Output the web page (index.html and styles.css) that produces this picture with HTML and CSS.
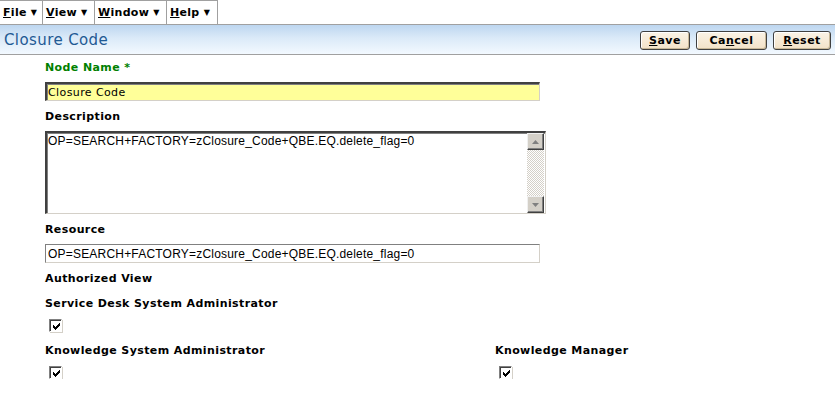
FILE: index.html
```html
<!DOCTYPE html>
<html lang="en">

<head>
    <meta charset="UTF-8">
    <title>Closure Code</title>
    <link rel="stylesheet" href="styles.css">
</head>

<body>
    <!-- Menu bar -->
    <div class="menubar">
        <div class="menu"><u>F</u>ile <span class="arrow">&#9660;</span></div>
        <div class="menu"><u>V</u>iew <span class="arrow">&#9660;</span></div>
        <div class="menu"><u>W</u>indow <span class="arrow">&#9660;</span></div>
        <div class="menu"><u>H</u>elp <span class="arrow">&#9660;</span></div>
    </div>

    <!-- Title bar -->
    <div class="titlebar">
        <h1 class="title">Closure Code</h1>
        <div class="buttons">
            <button class="btn btn-save"><u>S</u>ave</button>
            <button class="btn btn-cancel">Ca<u>n</u>cel</button>
            <button class="btn btn-reset"><u>R</u>eset</button>
        </div>
    </div>

    <!-- Form -->
    <div class="form">
        <div class="label required first">Node Name *</div>
        <input class="field field-name" type="text" value="Closure Code">

        <div class="label">Description</div>
        <div class="textbox">
            <textarea class="textbox-text">OP=SEARCH+FACTORY=zClosure_Code+QBE.EQ.delete_flag=0</textarea>
            <div class="scroll">
                <div class="scroll-btn">
                    <svg width="7" height="4" viewBox="0 0 7 4"><path d="M0 4 L3.5 0 L7 4 Z" fill="#808080"/></svg>
                </div>
                <div class="scroll-track"></div>
                <div class="scroll-btn">
                    <svg width="7" height="4" viewBox="0 0 7 4"><path d="M0 0 L3.5 4 L7 0 Z" fill="#808080"/></svg>
                </div>
            </div>
        </div>

        <div class="label">Resource</div>
        <input class="field field-resource" type="text" value="OP=SEARCH+FACTORY=zClosure_Code+QBE.EQ.delete_flag=0">

        <div class="label">Authorized View</div>

        <div class="label label-role">Service Desk System Administrator</div>
        <span class="check">
            <svg width="7" height="7" viewBox="0 0 7 7" shape-rendering="crispEdges"><path d="M0 2h1v1h1v1h1v-1h1v-1h1v-1h1v-1h1v3h-1v1h-1v1h-1v1h-1v1h-1v-1h-1v-1h-1z" fill="#000"/></svg>
        </span>

        <div class="roles">
            <div class="role">
                <div class="label label-role2">Knowledge System Administrator</div>
                <span class="check">
                    <svg width="7" height="7" viewBox="0 0 7 7" shape-rendering="crispEdges"><path d="M0 2h1v1h1v1h1v-1h1v-1h1v-1h1v-1h1v3h-1v1h-1v1h-1v1h-1v1h-1v-1h-1v-1h-1z" fill="#000"/></svg>
                </span>
            </div>
            <div class="role role-last">
                <div class="label label-role2">Knowledge Manager</div>
                <span class="check">
                    <svg width="7" height="7" viewBox="0 0 7 7" shape-rendering="crispEdges"><path d="M0 2h1v1h1v1h1v-1h1v-1h1v-1h1v-1h1v3h-1v1h-1v1h-1v1h-1v1h-1v-1h-1v-1h-1z" fill="#000"/></svg>
                </span>
            </div>
        </div>
    </div>
</body>

</html>
```

FILE: styles.css
```css
* {
    padding: 0;
    margin: 0;
    box-sizing: border-box;
}

body {
    background-color: #ffffff;
    font-family: "DejaVu Sans", Verdana, sans-serif;
    font-size: 11px;
    color: #000000;
}

/* Menu bar */
.menubar {
    display: flex;
    height: 24px;
}

.menu {
    height: 24px;
    padding: 5px 4px 0 3px;
    border: 1px solid #a0a0a0;
    border-bottom: none;
    border-left: none;
    font-weight: bold;
    font-size: 11px;
    letter-spacing: 0.3px;
    white-space: nowrap;
}

.menu:first-child {
    width: 43px;
}

.menu:nth-child(2) {
    width: 52px;
}

.menu:nth-child(3) {
    width: 72px;
}

.menu:nth-child(4) {
    width: 51px;
}

.arrow {
    font-size: 8px;
    position: relative;
    top: -1px;
}

/* Title bar */
.titlebar {
    height: 31px;
    border-top: 1px solid #a0a0a0;
    border-bottom: 1px solid #a0a0a0;
    background: linear-gradient(to bottom, #bdd6f0, #dbeaf8 45%, #f3f9ff);
    display: flex;
    align-items: center;
    justify-content: space-between;
    padding: 0 4px 0 4px;
}

.title {
    font-size: 15px;
    font-weight: normal;
    letter-spacing: 0.4px;
    color: #1f5a94;
}

.buttons {
    display: flex;
    gap: 6px;
    margin-top: 1px;
}

.btn {
    height: 19px;
    font-family: "DejaVu Sans", Verdana, sans-serif;
    font-size: 11px;
    font-weight: bold;
    color: #000000;
    background: linear-gradient(to bottom, #fbf3e6, #f2e2c8);
    border: 1px solid #404040;
    border-radius: 3px;
    box-shadow: inset 1px 1px 0 #ffffff, inset -1px -1px 0 #c8b898;
    letter-spacing: 0.5px;
}

.btn-save {
    width: 50px;
}

.btn-cancel {
    width: 71px;
}

.btn-reset {
    width: 58px;
}

/* Form */
.form {
    padding-left: 45px;
    display: flex;
    flex-direction: column;
    align-items: flex-start;
}

.label {
    font-weight: bold;
    font-size: 11px;
    line-height: 14px;
    margin-top: 9px;
    margin-bottom: 7px;
    letter-spacing: 0.4px;
    white-space: nowrap;
}

.label.first {
    margin-top: 6px;
}

.required {
    color: #008000;
}

.label-role {
    margin-top: 4px;
    margin-bottom: 8px;
}

.field {
    width: 495px;
    height: 19px;
    border-top: 2px solid #404040;
    border-left: 2px solid #404040;
    border-right: 1px solid #d4d0c8;
    border-bottom: 1px solid #d4d0c8;
    box-shadow: inset 1px 1px 0 #808080;
    padding: 1px 2px 0 1px;
    outline: none;
}

.field-name {
    background-color: #ffff99;
    font-family: "DejaVu Sans", Verdana, sans-serif;
    font-size: 11px;
    letter-spacing: 0.4px;
}

.field-resource {
    background-color: #ffffff;
    font-family: "Liberation Sans", Arial, sans-serif;
    font-size: 12px;
    letter-spacing: 0.2px;
    border-top: 1px solid #808080;
    border-left: 1px solid #808080;
    box-shadow: none;
    padding-left: 2px;
}

.textbox {
    width: 501px;
    height: 83px;
    display: flex;
    border-top: 2px solid #404040;
    border-left: 2px solid #404040;
    border-right: 1px solid #d4d0c8;
    border-bottom: 1px solid #d4d0c8;
    box-shadow: inset 1px 1px 0 #808080;
}

.textbox-text {
    flex: 1;
    border: none;
    outline: none;
    resize: none;
    overflow: hidden;
    font-family: "Liberation Sans", Arial, sans-serif;
    font-size: 12px;
    letter-spacing: 0.2px;
    padding: 1px 1px 0 1px;
    background: transparent;
}

.scroll {
    width: 17px;
    display: flex;
    flex-direction: column;
    margin-right: 1px;
}

.scroll-btn {
    height: 17px;
    background-color: #d4d0c8;
    border-top: 1px solid #f0f0f0;
    border-left: 1px solid #f0f0f0;
    border-right: 1px solid #404040;
    border-bottom: 1px solid #404040;
    box-shadow: inset -1px -1px 0 #808080;
    display: flex;
    align-items: center;
    justify-content: center;
}

.scroll-track {
    flex: 1;
    background: repeating-conic-gradient(#d4d0c8 0 25%, #ffffff 0 50%) 0 0 / 2px 2px;
}

.check {
    width: 13px;
    height: 13px;
    margin-left: 4px;
    border-top: 1px solid #808080;
    border-left: 1px solid #808080;
    border-right: 1px solid #ffffff;
    border-bottom: 1px solid #ffffff;
    box-shadow: inset 1px 1px 0 #404040, 1px 1px 0 #d4d0c8;
    background-color: #ffffff;
    display: flex;
    align-items: center;
    justify-content: center;
    padding: 1px 0 0 1px;
}

.roles {
    display: flex;
}

.role {
    width: 450px;
    display: flex;
    flex-direction: column;
    align-items: flex-start;
}

.role-last {
    width: auto;
}

.label-role2 {
    margin-top: 12px;
    margin-bottom: 8px;
}
```
